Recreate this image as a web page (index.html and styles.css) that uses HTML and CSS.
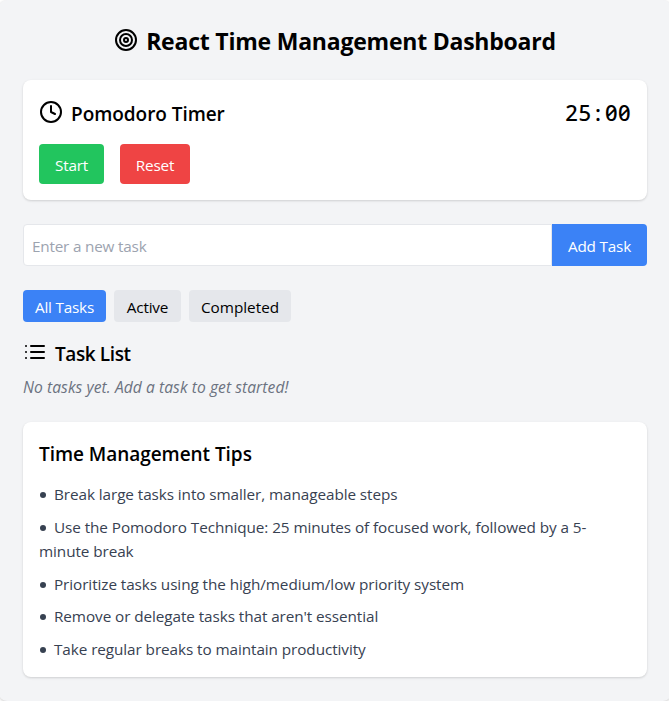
FILE: index.html
```html
<!DOCTYPE html>
<html lang="en">
<head>
<meta charset="utf-8">
<title>React Time Management Dashboard</title>
<link rel="stylesheet" href="styles.css">
</head>
<body>
<main class="dashboard">
  <h1 class="page-title">
    <svg class="icon" viewBox="0 0 24 24"><circle cx="12" cy="12" r="10"/><circle cx="12" cy="12" r="6"/><circle cx="12" cy="12" r="2"/></svg>
    <span>React Time Management Dashboard</span>
  </h1>
  <section class="card timer">
    <div class="timer-head">
      <h2 class="heading timer-title">
        <svg class="icon" viewBox="0 0 24 24"><circle cx="12" cy="12" r="10"/><path d="M12 6v6l4 2"/></svg>
        <span>Pomodoro Timer</span>
      </h2>
      <div class="clock"><span>2</span><span>5</span><span>:</span><span>0</span><span>0</span></div>
    </div>
    <div class="timer-actions">
      <button class="btn start">Start</button>
      <button class="btn reset">Reset</button>
    </div>
  </section>
  <div class="task-form">
    <input class="task-input" type="text" placeholder="Enter a new task">
    <button class="btn add">Add Task</button>
  </div>
  <div class="filters">
    <button class="filter all selected">All Tasks</button>
    <button class="filter active">Active</button>
    <button class="filter completed">Completed</button>
  </div>
  <section class="tasks">
    <h2 class="heading list-title">
      <svg class="icon" viewBox="0 0 24 24"><path d="M8 6h13M8 12h13M8 18h13M3 6h.01M3 12h.01M3 18h.01"/></svg>
      <span>Task List</span>
    </h2>
    <p class="empty">No tasks yet. Add a task to get started!</p>
  </section>
  <section class="card tips">
    <h2 class="heading tips-title"><span>Time Management Tips</span></h2>
    <ul class="tip-list">
      <li>Break large tasks into smaller, manageable steps</li>
      <li>Use the Pomodoro Technique: 25 minutes of focused work, followed by a 5-<br>minute break</li>
      <li>Prioritize tasks using the high/medium/low priority system</li>
      <li>Remove or delegate tasks that aren't essential</li>
      <li>Take regular breaks to maintain productivity</li>
    </ul>
  </section>
</main>
</body>
</html>
```
FILE: styles.css
```css
* { box-sizing: border-box; margin: 0; padding: 0; }
body {
  background: #fff;
  color: #000;
  font: 15.3px/24px "Open Sans", "Noto Sans", sans-serif;
  letter-spacing: -0.2px;
  overflow: hidden;
}
button, input { font: inherit; letter-spacing: inherit; border: 0; }
.dashboard {
  height: 701px;
  margin: 0 -2px 0 -1px;
  padding: 24px;
  background: #f3f4f6;
  border-radius: 8px;
  box-shadow: 0 1px 3px rgba(0, 0, 0, .2);
}
.icon {
  flex: none;
  width: 24px;
  height: 24px;
  fill: none;
  stroke: currentColor;
  stroke-width: 2;
  stroke-linecap: round;
  stroke-linejoin: round;
}
.page-title {
  display: flex;
  justify-content: center;
  align-items: center;
  gap: 8px;
  height: 32px;
  margin-bottom: 24px;
  font-size: 23px;
  font-weight: 700;
  letter-spacing: -0.22px;
  white-space: nowrap;
}
.page-title span { padding-top: 2px; }
.card {
  padding: 16px;
  background: #fff;
  border-radius: 8px;
  box-shadow: 0 1px 3px rgba(0, 0, 0, .1), 0 1px 2px rgba(0, 0, 0, .06);
}
.heading {
  display: flex;
  align-items: center;
  gap: 8px;
  height: 28px;
  font-size: 19px;
  font-weight: 600;
  letter-spacing: -0.05px;
  white-space: nowrap;
}
.heading span { padding-top: 3px; }
.timer { height: 120px; margin-bottom: 24px; }
.timer-head {
  display: flex;
  justify-content: space-between;
  align-items: center;
  height: 32px;
  margin-bottom: 16px;
}
.clock {
  display: flex;
  font: 500 22px/32px "Noto Sans", sans-serif;
  font-feature-settings: "zero", "tnum";
  letter-spacing: 0;
}
.clock span { width: 13.2px; text-align: center; }
.timer-actions { display: flex; gap: 16px; }
.btn {
  height: 40px;
  padding-top: 2px;
  border-radius: 4px;
  color: #fff;
  white-space: nowrap;
}
.start { width: 65px; background: #22c55e; }
.reset { width: 70px; background: #ef4444; }
.task-form { display: flex; height: 42px; margin-bottom: 24px; }
.task-input {
  flex: 1;
  min-width: 0;
  padding: 2px 8px 0;
  background: #fff;
  border: 1px solid #e5e7eb;
  border-radius: 4px 0 0 4px;
}
.task-input::placeholder { color: #9ca3af; opacity: 1; }
.add { width: 95px; height: 42px; border-radius: 0 4px 4px 0; background: #3b82f6; }
.filters { display: flex; gap: 8px; margin-bottom: 16px; }
.filter { height: 32px; padding-top: 2px; border-radius: 4px; background: #e5e7eb; color: #000; white-space: nowrap; }
.selected { background: #3b82f6; color: #fff; }
.all { width: 83px; }
.active { width: 67px; }
.completed { width: 102px; letter-spacing: 0; }
.tasks { margin-bottom: 24px; }
.list-title { margin-bottom: 8px; letter-spacing: -0.4px; }
.empty {
  height: 24px;
  padding-top: 1px;
  color: #6b7280;
  font-size: 15.6px;
  font-style: italic;
  letter-spacing: 0.07px;
  white-space: nowrap;
}
.tips { height: 255px; }
.tips-title { margin-bottom: 16.4px; }
.tip-list {
  display: flex;
  flex-direction: column;
  gap: 8px;
  list-style: none;
  line-height: 24.5px;
  letter-spacing: -0.08px;
  color: #374151;
  white-space: nowrap;
}
.tip-list li::before {
  content: "";
  display: inline-block;
  width: 6px;
  height: 6px;
  margin: 0 8px 2px 1px;
  border-radius: 50%;
  background: currentColor;
}
```
